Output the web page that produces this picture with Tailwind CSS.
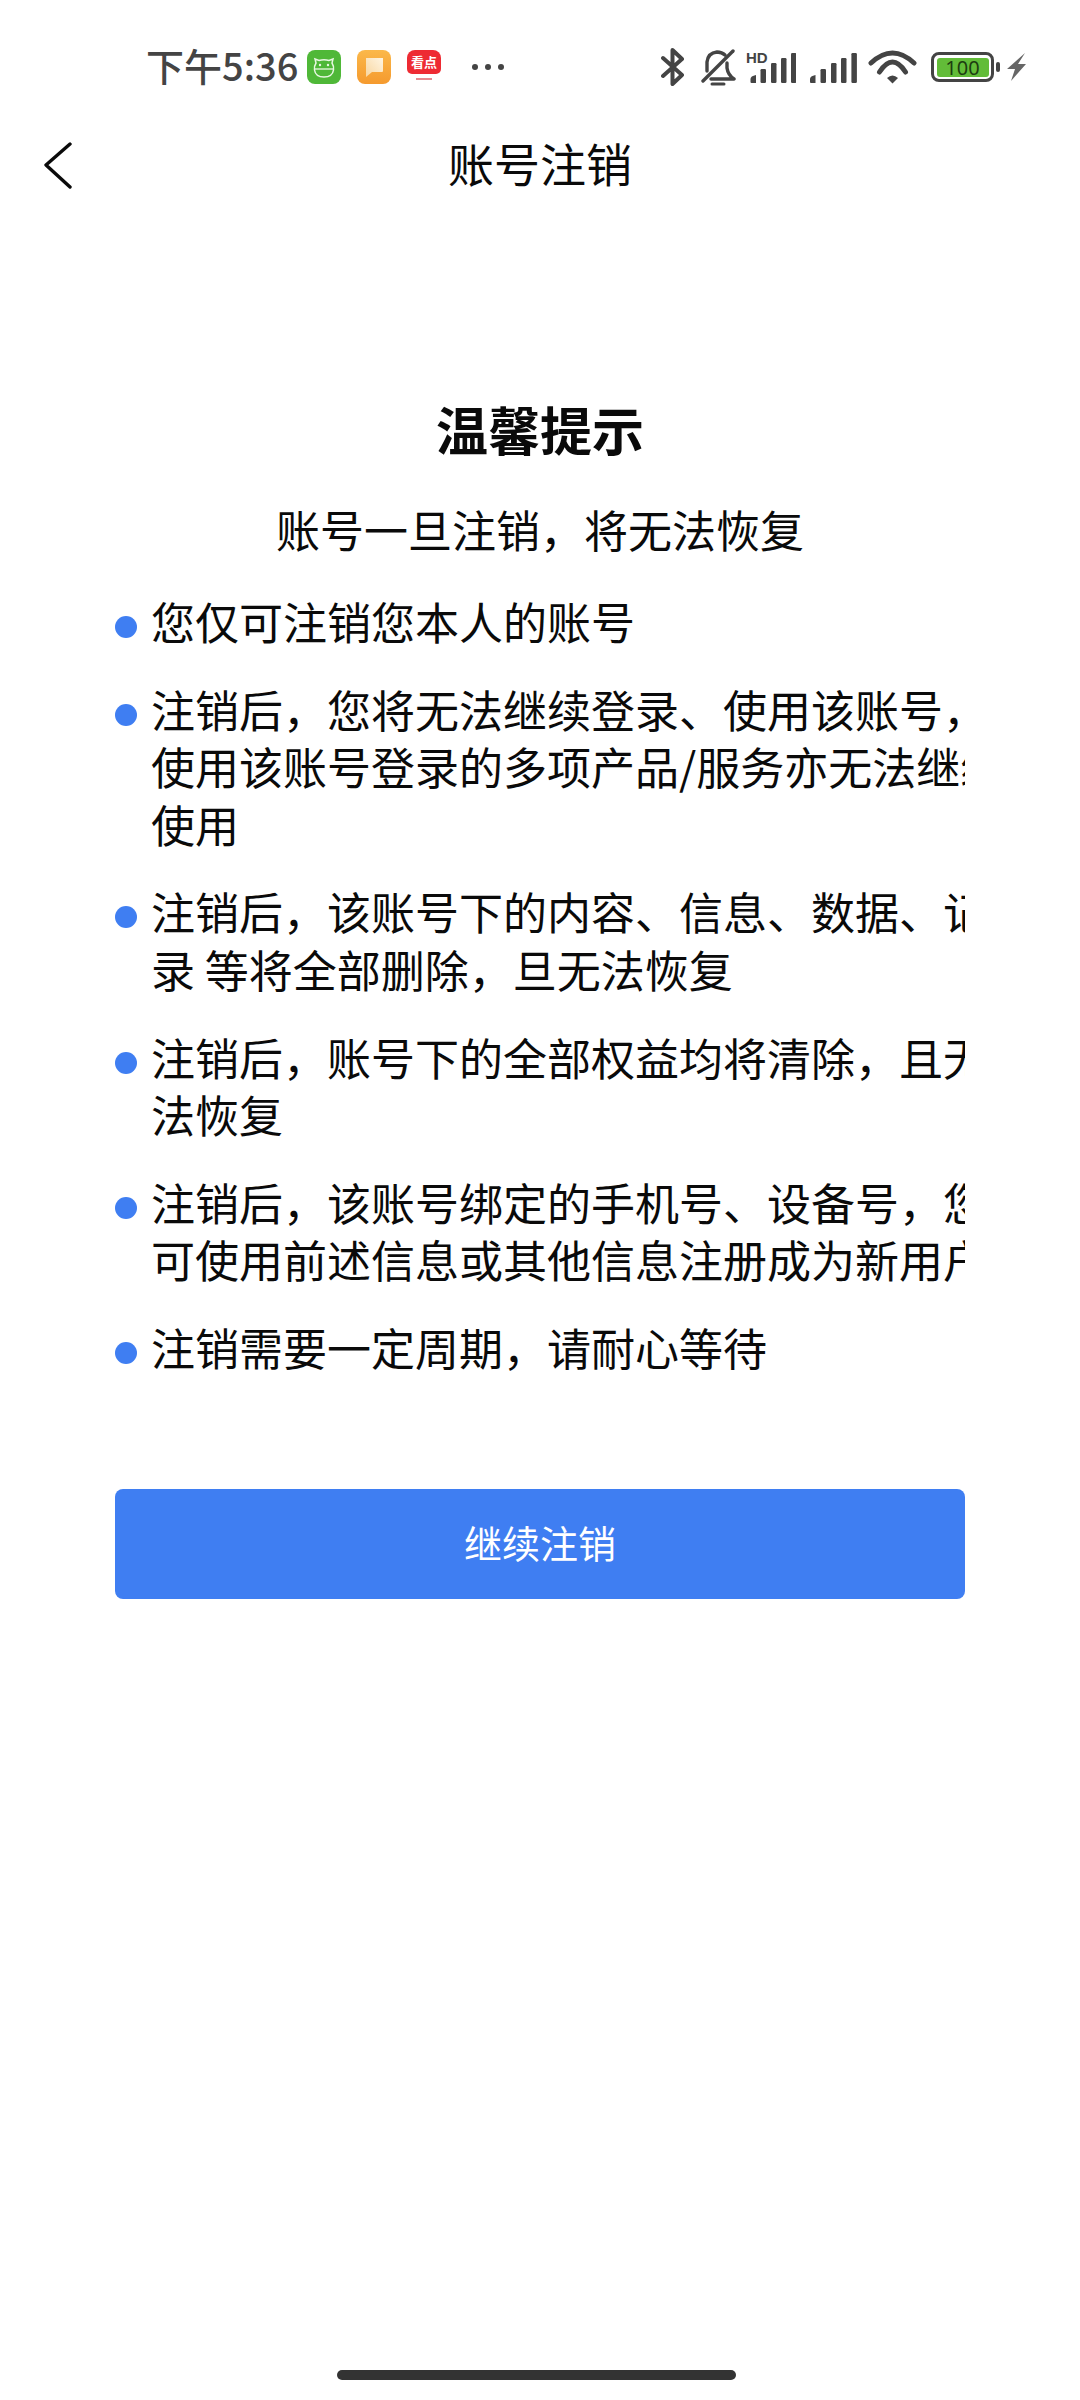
<!DOCTYPE html>
<html lang="zh-CN">
<head>
    <meta charset="UTF-8">
    <meta name="viewport" content="width=device-width, initial-scale=1.0">
    <title>账号注销</title>
    <script src="https://cdn.jsdelivr.net/npm/@tailwindcss/browser@4"></script>
</head>
<body class="relative w-[1080px] h-[2400px] bg-white overflow-hidden font-['Noto_Sans_CJK_SC','Noto_Sans',sans-serif] text-[#0a0a0a]">

    <!-- 状态栏 -->
    <div class="h-[116px] pt-[49px] pl-[146px] flex items-start text-[#444]">
        <span class="w-[161px] h-[34px] leading-[32px] text-[38px] font-medium whitespace-nowrap">下午5:36</span>

        <!-- 通知图标 -->
        <svg class="w-[34px] h-[34px] mt-[1px]" viewBox="0 0 34 34">
            <rect width="34" height="34" rx="8" fill="#4fb838"/>
            <path d="M9 13 L8 9 L12 10.500 Q17 9 22 10.500 L26 9 L25 13 Q27 16 26.500 20 Q25.500 27 17 27 Q8.500 27 7.500 20 Q7 16 9 13Z" fill="none" stroke="#e8f7e2" stroke-width="1.500"/>
            <path d="M8 19 H26" stroke="#e8f7e2" stroke-width="1.300"/>
            <circle cx="13" cy="15" r="1.200" fill="#e8f7e2"/>
            <circle cx="21" cy="15" r="1.200" fill="#e8f7e2"/>
        </svg>
        <svg class="w-[34px] h-[34px] mt-[1px] ml-[16px]" viewBox="0 0 34 34">
            <defs>
                <linearGradient id="og" x1="0" y1="0" x2="0" y2="1">
                    <stop offset="0" stop-color="#fbb84a"/>
                    <stop offset="1" stop-color="#f59a2e"/>
                </linearGradient>
                <linearGradient id="ng" x1="0" y1="1" x2="1" y2="0">
                    <stop offset="0" stop-color="#f8d6a0"/>
                    <stop offset="1" stop-color="#fff5e2"/>
                </linearGradient>
            </defs>
            <rect width="34" height="34" rx="8" fill="url(#og)"/>
            <path d="M9 8 H26 V21 Q26 22 25 22 H15 L9 27Z" fill="url(#ng)"/>
        </svg>
        <div class="w-[34px] h-[34px] mt-[1px] ml-[16px] flex flex-col items-center">
            <div class="w-[34px] h-[24px] bg-[#ee2b33] rounded-t-[8px] rounded-b-[5px] text-white text-[13px] leading-[24px] font-bold text-center whitespace-nowrap">看点</div>
            <div class="w-[16px] h-[2px] mt-[4px] bg-[#e78a8f]"></div>
        </div>

        <!-- 更多 -->
        <div class="flex gap-[7px] ml-[31px] mt-[15px]">
            <span class="w-[6px] h-[6px] rounded-full bg-[#444]"></span>
            <span class="w-[6px] h-[6px] rounded-full bg-[#444]"></span>
            <span class="w-[6px] h-[6px] rounded-full bg-[#444]"></span>
        </div>

        <!-- 蓝牙 -->
        <svg class="w-[26px] h-[40px] ml-[157px] -mt-[2px]" viewBox="0 0 26 40" fill="none" stroke="#444" stroke-width="4" stroke-linejoin="round" stroke-linecap="round">
            <path d="M2 11 L21 28 L11.500 37 V3 L21 12 L2 29"/>
        </svg>
        <!-- 静音铃铛 -->
        <svg class="w-[36px] h-[38px] ml-[13px]" viewBox="0 0 36 38" fill="none" stroke="#444" stroke-width="3.400" stroke-linecap="round" stroke-linejoin="round">
            <path d="M7 22 V13 Q8 4 17 3 Q22 3 25 6"/>
            <path d="M27 14 V19 Q28 26 34 30 H11"/>
            <path d="M33 2 L3 32"/>
            <path d="M12 35 H24" stroke-width="3"/>
        </svg>
        <!-- 信号 HD -->
        <div class="relative w-[50px] h-[36px] ml-[10px]">
            <span class="absolute left-0 top-[1px] text-[15px] leading-[15px] font-bold font-['Liberation_Sans',sans-serif]">HD</span>
            <svg class="absolute left-0 top-0 w-[50px] h-[36px]" viewBox="0 0 50 36" fill="#444">
                <path d="M4.500 30 q0 -3 5.500 -4 V34 H5.500 q-1 0 -1 -1Z"/>
                <rect x="14.500" y="20" width="5.500" height="14" rx="1.200"/>
                <rect x="25" y="14" width="5.500" height="20" rx="1.200"/>
                <rect x="35" y="9" width="5.500" height="25" rx="1.200"/>
                <rect x="45" y="4" width="5.500" height="30" rx="1.200"/>
            </svg>
        </div>
        <!-- 信号 -->
        <svg class="w-[49px] h-[36px] ml-[12px]" viewBox="0 0 49 36" fill="#444">
            <path d="M2 30 q0 -3 5.500 -4 V34 H3 q-1 0 -1 -1Z"/>
            <rect x="12.500" y="20" width="5.500" height="14" rx="1.200"/>
            <rect x="23" y="14" width="5.500" height="20" rx="1.200"/>
            <rect x="33" y="9" width="5.500" height="25" rx="1.200"/>
            <rect x="43.400" y="4" width="5.500" height="30" rx="1.200"/>
        </svg>
        <!-- Wi-Fi -->
        <svg class="w-[50px] h-[36px] ml-[11px]" viewBox="0 0 50 36" fill="none" stroke="#444" stroke-width="5" stroke-linecap="round">
            <path d="M3 14 Q24.500 -6 46 14"/>
            <path d="M11.500 23 Q24.500 3 37.500 23"/>
            <path d="M19 29 Q24.500 24 30 29 L24.500 34.500Z" fill="#444" stroke="none"/>
        </svg>
        <!-- 电量 -->
        <div class="flex items-center ml-[13px] mt-[3px]">
            <div class="w-[63px] h-[30px] rounded-[8px] border-[3px] border-[#444] p-[2.500px]">
                <div class="h-full rounded-[3px] bg-[#62bc38] text-[#1c3d10] text-[20px] leading-[19px] text-center font-['Noto_Sans',sans-serif]">100</div>
            </div>
            <span class="w-[4px] h-[10px] ml-[2px] rounded-[2px] bg-[#444]"></span>
        </div>
        <!-- 充电 -->
        <svg class="w-[19px] h-[28px] ml-[7px] mt-[4px]" viewBox="0 0 19 28" fill="#666">
            <path d="M18 0 L0 16 H8 L4 28 L19 11 H11Z"/>
        </svg>
    </div>

    <!-- 标题栏 -->
    <div class="relative h-[98px] flex items-center justify-center">
        <svg class="absolute left-[42px] top-[25px] w-[30px] h-[48px]" viewBox="0 0 30 48" fill="none" stroke="#0a0a0a" stroke-width="3.400" stroke-linecap="round" stroke-linejoin="round">
            <path d="M28 3 L4 24 L28 46" />
        </svg>
        <h1 class="text-[46px] leading-[60px] font-normal -mt-[6px]">账号注销</h1>
    </div>

    <!-- 内容 -->
    <div class="w-[850px] ml-[115px] mt-[185px]">
        <h2 class="text-[52px] leading-[60px] font-bold text-center">温馨提示</h2>
        <p class="mt-[42px] text-[44px] leading-[57px] text-center">账号一旦注销，将无法恢复</p>

        <ul class="mt-[35px] overflow-hidden flex flex-col gap-[30px] text-[44px] leading-[57.6px]">
            <li class="flex w-[900px]">
                <span class="w-[22px] h-[22px] mt-[23px] mr-[14px] shrink-0 rounded-full bg-[#3f7ef2]"></span>
                <span class="w-[860px]">您仅可注销您本人的账号</span>
            </li>
            <li class="flex w-[900px]">
                <span class="w-[22px] h-[22px] mt-[23px] mr-[14px] shrink-0 rounded-full bg-[#3f7ef2]"></span>
                <span class="w-[860px]">注销后，您将无法继续登录、使用该账号，使用该账号登录的多项产品/服务亦无法继续使用</span>
            </li>
            <li class="flex w-[900px]">
                <span class="w-[22px] h-[22px] mt-[23px] mr-[14px] shrink-0 rounded-full bg-[#3f7ef2]"></span>
                <span class="w-[860px]">注销后，该账号下的内容、信息、数据、记录 等将全部删除，旦无法恢复</span>
            </li>
            <li class="flex w-[900px]">
                <span class="w-[22px] h-[22px] mt-[23px] mr-[14px] shrink-0 rounded-full bg-[#3f7ef2]"></span>
                <span class="w-[860px]">注销后，账号下的全部权益均将清除，且无法恢复</span>
            </li>
            <li class="flex w-[900px]">
                <span class="w-[22px] h-[22px] mt-[23px] mr-[14px] shrink-0 rounded-full bg-[#3f7ef2]"></span>
                <span class="w-[860px]">注销后，该账号绑定的手机号、设备号，您可使用前述信息或其他信息注册成为新用户</span>
            </li>
            <li class="flex w-[900px]">
                <span class="w-[22px] h-[22px] mt-[23px] mr-[14px] shrink-0 rounded-full bg-[#3f7ef2]"></span>
                <span class="w-[860px]">注销需要一定周期，请耐心等待</span>
            </li>
        </ul>

        <button class="w-full h-[110px] mt-[112px] pb-[5px] rounded-[8px] bg-[#3f7ef2] text-white text-[38px]">继续注销</button>
    </div>

    <!-- 底部横条 -->
    <div class="absolute left-[337px] top-[2370px] w-[399px] h-[10px] rounded-full bg-[#333]"></div>
</body>
</html>
